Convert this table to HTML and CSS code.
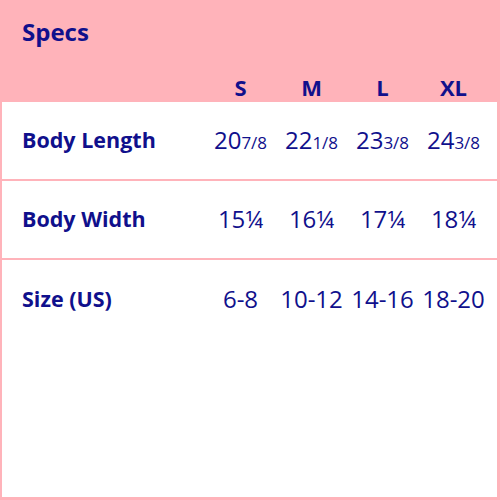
FILE: index.html
```html
<!DOCTYPE html>
<html>
<head>
<meta charset="utf-8">
<link rel="stylesheet" href="styles.css">
</head>
<body>
<div class="specs">
  <div class="head">
    <div class="title">Specs</div>
    <div class="row sizes">
      <div class="label"></div>
      <div class="cell">S</div>
      <div class="cell">M</div>
      <div class="cell">L</div>
      <div class="cell">XL</div>
    </div>
  </div>
  <div class="row body-row">
    <div class="label">Body Length</div>
    <div class="cell val">20<span class="frac">7/8</span></div>
    <div class="cell val">22<span class="frac">1/8</span></div>
    <div class="cell val">23<span class="frac">3/8</span></div>
    <div class="cell val">24<span class="frac">3/8</span></div>
  </div>
  <div class="row body-row">
    <div class="label">Body Width</div>
    <div class="cell val">15¼</div>
    <div class="cell val">16¼</div>
    <div class="cell val">17¼</div>
    <div class="cell val">18¼</div>
  </div>
  <div class="row body-row last">
    <div class="label">Size (US)</div>
    <div class="cell val">6-8</div>
    <div class="cell val">10-12</div>
    <div class="cell val">14-16</div>
    <div class="cell val">18-20</div>
  </div>
</div>
</body>
</html>
```
FILE: styles.css
```css
html, body {
  margin: 0;
  padding: 0;
  background: #ffffff;
}
.specs {
  box-sizing: border-box;
  width: 500px;
  height: 500px;
  border-left: 2px solid #ffb3ba;
  border-right: 3px solid #ffb3ba;
  border-bottom: 3px solid #ffb3ba;
  font-family: "Open Sans", "Noto Sans", sans-serif;
  color: #10108c;
  background: #ffffff;
}
.head {
  background: #ffb3ba;
  height: 102px;
  margin-left: -2px;
  margin-right: -3px;
  padding-left: 2px;
  padding-right: 3px;
  box-sizing: border-box;
}
.title {
  font-weight: 700;
  font-size: 24px;
  line-height: 32px;
  padding: 16px 0 0 20px;
}
.row {
  display: grid;
  grid-template-columns: 1fr repeat(4, 71px);
  padding: 0 8px 0 20px;
  align-items: center;
}
.sizes {
  margin-top: 27px;
  font-weight: 700;
  font-size: 22px;
  line-height: 24px;
}
.cell {
  text-align: center;
  white-space: nowrap;
}
.label {
  font-weight: 700;
  font-size: 21.5px;
  white-space: nowrap;
}
.body-row {
  height: 79px;
  box-sizing: border-box;
  border-bottom: 2px solid #ffb3ba;
  padding-bottom: 3px;
}
.body-row.last {
  border-bottom: none;
}
.val {
  font-size: 24px;
  font-weight: 400;
}
.frac {
  font-size: 17px;
}
```
